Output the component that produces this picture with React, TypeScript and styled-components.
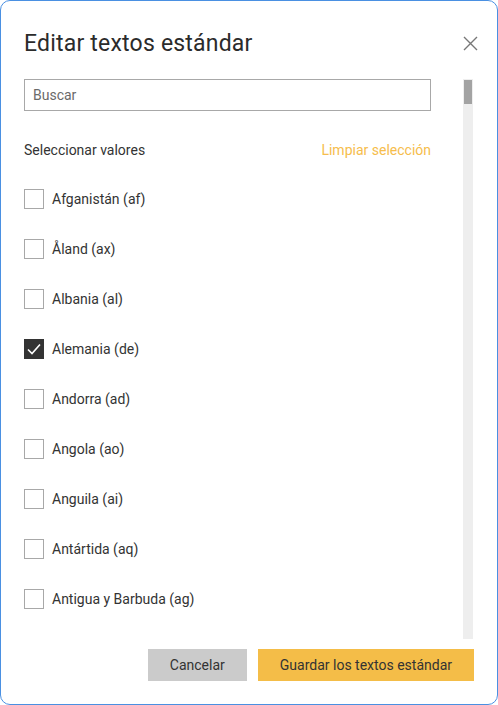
import React, { useState } from "react"
import styled, { createGlobalStyle } from "styled-components"

const GlobalStyle = createGlobalStyle`
  html, body {
    margin: 0;
    padding: 0;
    background: #ffffff;
  }
  * { box-sizing: border-box; }
`

const countries = [
  { name: "Afganistán", code: "af" },
  { name: "Åland", code: "ax" },
  { name: "Albania", code: "al" },
  { name: "Alemania", code: "de" },
  { name: "Andorra", code: "ad" },
  { name: "Angola", code: "ao" },
  { name: "Anguila", code: "ai" },
  { name: "Antártida", code: "aq" },
  { name: "Antigua y Barbuda", code: "ag" },
]

const Dialog = styled.div`
  width: 498px;
  height: 705px;
  border: 1px solid #4a90e2;
  border-radius: 10px;
  background: #fff;
  display: flex;
  flex-direction: column;
  font-family: Roboto, "Noto Sans", sans-serif;
  color: #333;
  overflow: hidden;
`

const Header = styled.div`
  display: flex;
  align-items: center;
  justify-content: space-between;
  padding: 24px 19px 0 23px;
  height: 60px;
`

const Title = styled.h2`
  margin: 0;
  font-size: 23px;
  font-weight: 400;
  color: #2b2b2b;
  letter-spacing: 0.2px;
`

const CloseButton = styled.button`
  border: 0;
  background: none;
  padding: 0;
  width: 16px;
  height: 16px;
  cursor: pointer;
  display: flex;
  align-items: center;
  justify-content: center;
`

const Body = styled.div`
  flex: 1;
  display: flex;
  padding: 18px 24px 0 23px;
  min-height: 0;
`

const Scroll = styled.div`
  flex: 1;
  height: 560px;
  overflow: hidden;
  padding-right: 32px;
`

const ScrollTrack = styled.div`
  width: 10px;
  height: 560px;
  background: #eeeeee;
`

const ScrollThumb = styled.div`
  width: 8px;
  height: 24px;
  margin: 1px;
  background: #a3a3a3;
`

const SearchInput = styled.input`
  width: 100%;
  height: 32px;
  border: 1px solid #a8a8a8;
  padding: 0 8px;
  font-family: inherit;
  font-size: 14px;
  color: #333;
  outline: none;
  &::placeholder { color: #6a6a6a; }
`

const SelectRow = styled.div`
  display: flex;
  justify-content: space-between;
  align-items: center;
  margin-top: 31px;
  margin-bottom: 16px;
  font-size: 14px;
`

const ClearLink = styled.button`
  border: 0;
  background: none;
  padding: 0;
  font-family: inherit;
  font-size: 14px;
  color: #f6bd4c;
  cursor: pointer;
`

const OptionRow = styled.label`
  display: flex;
  align-items: center;
  gap: 8px;
  height: 50px;
  font-size: 14px;
  color: #333;
  cursor: pointer;
`

const Box = styled.span<{ $checked: boolean }>`
  width: 20px;
  height: 20px;
  border: 1px solid ${p => (p.$checked ? "#333" : "#a8a8a8")};
  background: ${p => (p.$checked ? "#333" : "#fff")};
  display: flex;
  align-items: center;
  justify-content: center;
  flex-shrink: 0;
`

const Footer = styled.div`
  display: flex;
  justify-content: flex-end;
  gap: 11px;
  padding: 10px 23px 23px 0;
`

const Button = styled.button<{ $primary?: boolean }>`
  height: 32px;
  border: 0;
  padding: 0 22px;
  font-family: Roboto, "Noto Sans", sans-serif;
  font-size: 14px;
  color: #333;
  background: ${p => (p.$primary ? "#f4bd48" : "#cbcbcb")};
  cursor: pointer;
`

const App = () => {
  const [selected, setSelected] = useState<string[]>(["de"])

  const toggle = (code: string) =>
    setSelected(s => (s.includes(code) ? s.filter(c => c !== code) : [...s, code]))

  return (
    <>
      <GlobalStyle />
      <Dialog>
        <Header>
          <Title>Editar textos estándar</Title>
          <CloseButton aria-label="Cerrar">
            <svg width="15" height="15" viewBox="0 0 15 15">
              <path d="M1 1 L14 14 M14 1 L1 14" stroke="#777" strokeWidth="1.4" fill="none" />
            </svg>
          </CloseButton>
        </Header>
        <Body>
          <Scroll>
            <SearchInput placeholder="Buscar" />
            <SelectRow>
              <span>Seleccionar valores</span>
              <ClearLink onClick={() => setSelected([])}>Limpiar selección</ClearLink>
            </SelectRow>
            {countries.map(c => {
              const checked = selected.includes(c.code)
              return (
                <OptionRow key={c.code} onClick={() => toggle(c.code)}>
                  <Box $checked={checked}>
                    {checked && (
                      <svg width="14" height="12" viewBox="0 0 14 12">
                        <path d="M1 6.5 L5 10.5 L13 1.5" stroke="#fff" strokeWidth="1.6" fill="none" />
                      </svg>
                    )}
                  </Box>
                  {c.name} ({c.code})
                </OptionRow>
              )
            })}
          </Scroll>
          <ScrollTrack>
            <ScrollThumb />
          </ScrollTrack>
        </Body>
        <Footer>
          <Button>Cancelar</Button>
          <Button $primary>Guardar los textos estándar</Button>
        </Footer>
      </Dialog>
    </>
  )
}

export default App
